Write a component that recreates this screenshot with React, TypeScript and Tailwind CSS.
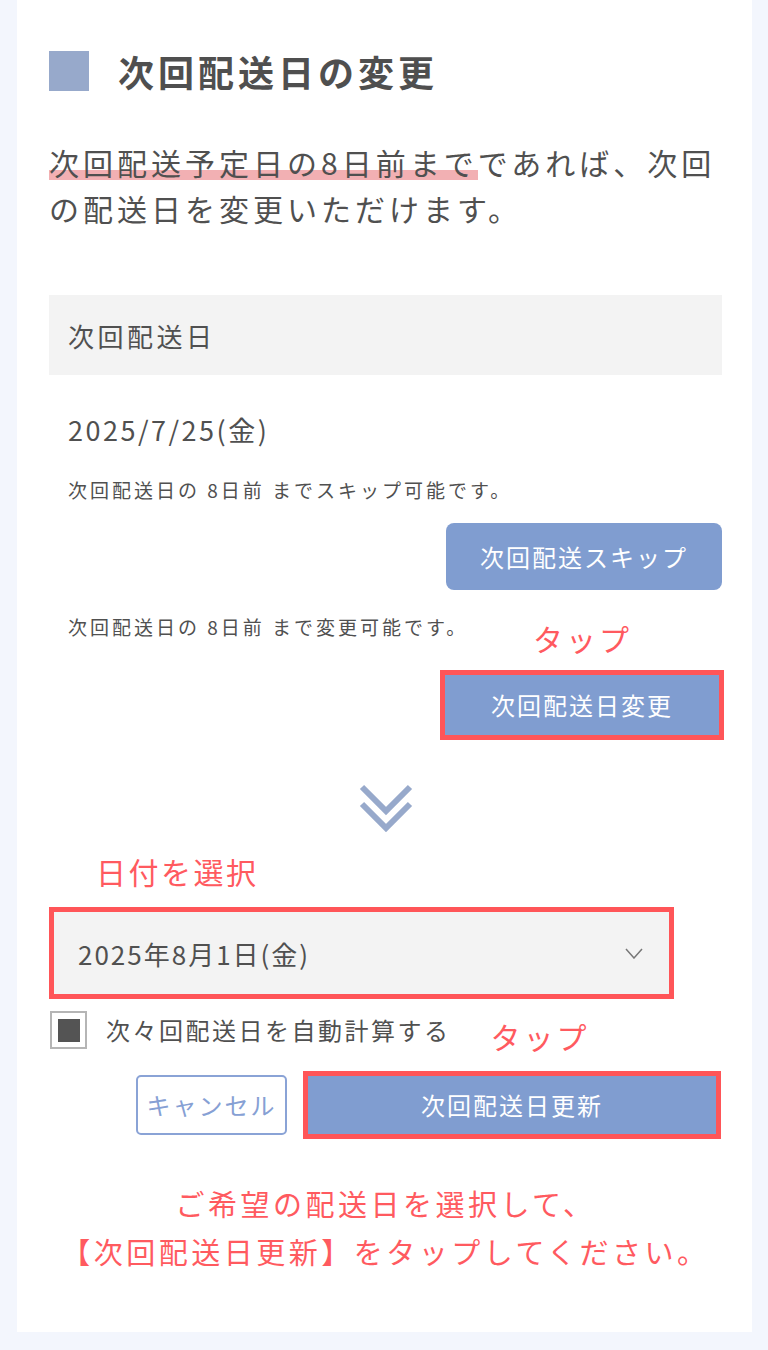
const font = { fontFamily: '"Noto Sans CJK JP", "Noto Sans", sans-serif' };

function DoubleChevron() {
  return (
    <svg width="54" height="48" viewBox="0 0 54 48" fill="none">
      <polyline points="3,3 27,27 51,3" stroke="#97a9cb" strokeWidth="6" />
      <polyline points="3,20 27,44 51,20" stroke="#97a9cb" strokeWidth="6" />
    </svg>
  );
}

export default function App() {
  return (
    <main className="min-h-[1350px] bg-[#f3f6fd] pb-[19px]" style={font}>
      <div className="ml-[17px] w-[735px] bg-white pl-[32px] pr-[30px] pt-[51px] pb-[57px] text-[#505050]">
        {/* Heading */}
        <div className="flex items-center">
          <span className="h-[40px] w-[40px] bg-[#97a9cb]" />
          <h1 className="ml-[29px] text-[36px] font-bold leading-[40px] tracking-[4px] text-[#4f4f4f]">
            次回配送日の変更
          </h1>
        </div>

        <p className="mt-[48px] whitespace-nowrap text-[30px] leading-[46px] tracking-[4px]">
          <span className="bg-[linear-gradient(transparent_68%,#f2b0b3_68%,#f2b0b3_91%,transparent_91%)]">
            次回配送予定日の8日前まで
          </span>
          であれば、次回
          <br />
          の配送日を変更いただけます。
        </p>

        {/* Next delivery box */}
        <div className="mt-[64px] flex h-[80px] items-center bg-[#f3f3f3] pl-[19px] text-[26px] tracking-[3.5px]">
          次回配送日
        </div>

        <div className="px-[19px]">
          <p className="mt-[37px] text-[27px] leading-[36px] tracking-[2.5px]">2025/7/25(金)</p>
          <p className="mt-[28px] text-[19px] leading-[28px] tracking-[3px]">
            次回配送日の 8日前 までスキップ可能です。
          </p>
        </div>

        <div className="mt-[19px] flex justify-end">
          <button className="h-[67px] w-[276px] rounded-[8px] bg-[#809dd0] text-[24px] tracking-[2px] text-white">
            次回配送スキップ
          </button>
        </div>

        <div className="mt-[23px] flex items-start">
          <p className="w-[484px] pl-[19px] text-[19px] leading-[28px] tracking-[3px]">
            次回配送日の 8日前 まで変更可能です。
          </p>
          <span className="mt-[5px] text-[30px] leading-[40px] tracking-[3px] text-[#ff5a5f]">
            タップ
          </span>
        </div>

        <div className="mt-[12px] mr-[-2px] flex justify-end">
          <div className="border-[5px] border-[#ff5558]">
            <button className="h-[60px] w-[274px] bg-[#809dd0] text-[24px] tracking-[2px] text-white">
              次回配送日変更
            </button>
          </div>
        </div>

        <div className="mt-[44px] flex justify-center">
          <DoubleChevron />
        </div>

        <p className="mt-[19px] pl-[47px] text-[30px] leading-[40px] tracking-[2.5px] text-[#ff5a5f]">
          日付を選択
        </p>

        {/* Date select */}
        <div className="mt-[16px] w-[625px] border-[5px] border-[#ff5558]">
          <div className="flex h-[82px] items-center justify-between bg-[#f3f3f3] pl-[24px] pr-[26px]">
            <span className="text-[26px] tracking-[2px]">2025年8月1日(金)</span>
            <svg width="18" height="11" viewBox="0 0 18 11" fill="none">
              <polyline points="1,1 9,10 17,1" stroke="#777" strokeWidth="1.5" />
            </svg>
          </div>
        </div>

        <div className="mt-[12px] flex items-start">
          <span className="ml-[1px] flex h-[38px] w-[37px] items-center justify-center border-[2px] border-[#b5b5b5] bg-white">
            <span className="h-[23px] w-[22px] bg-[#545454]" />
          </span>
          <span className="ml-[19px] text-[24px] leading-[38px] tracking-[2.5px]">次々回配送日を自動計算する</span>
          <span className="ml-[40px] mt-[6px] text-[30px] leading-[38px] tracking-[3px] text-[#ff5a5f]">
            タップ
          </span>
        </div>

        <div className="mt-[16px] flex items-center justify-end gap-[16px] pr-[1px]">
          <button className="h-[60px] w-[151px] rounded-[5px] border-[2px] border-[#8aa3d6] bg-white text-[24px] tracking-[2px] text-[#86a0d4]">
            キャンセル
          </button>
          <div className="border-[5px] border-[#ff5558]">
            <button className="h-[58px] w-[408px] bg-[#809dd0] text-[24px] tracking-[2px] text-white">
              次回配送日更新
            </button>
          </div>
        </div>

        <p className="mt-[40px] text-center text-[29px] leading-[48px] tracking-[3.5px] text-[#ff5a5f]">
          ご希望の配送日を選択して、
          <br />
          【次回配送日更新】をタップしてください。
        </p>
      </div>
    </main>
  );
}
